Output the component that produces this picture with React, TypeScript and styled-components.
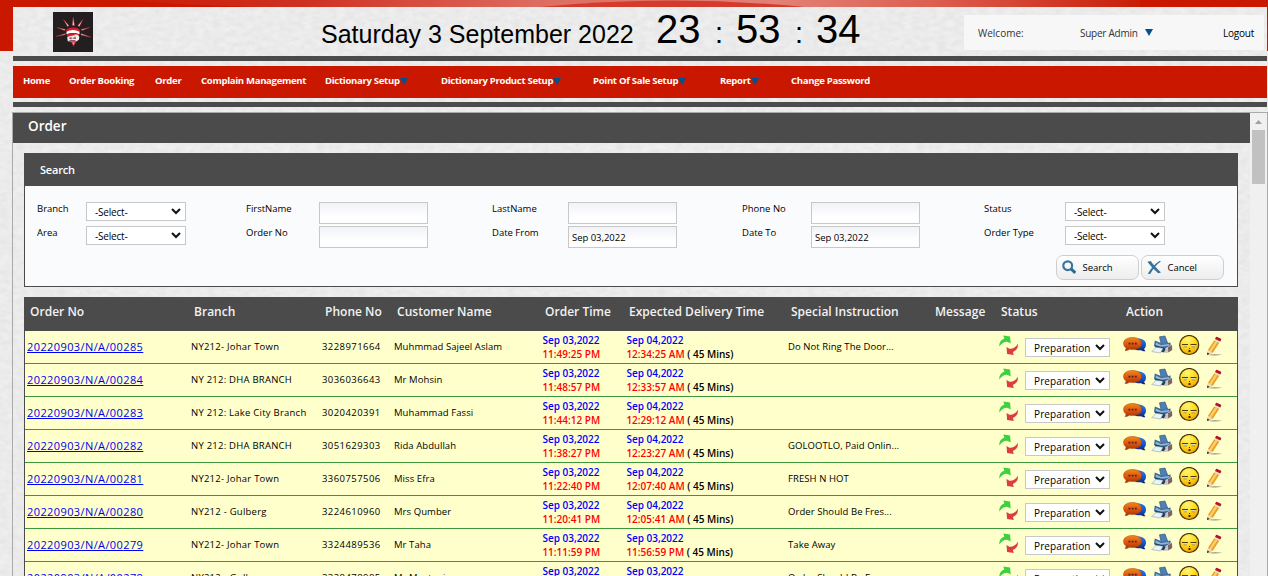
import React from "react";
import styled, { createGlobalStyle } from "styled-components";

const ui = `"Open Sans", "Noto Sans", sans-serif`;
const dark = "#4b4b4b";
const red = "#c91700";

// Faint paper grain for the page and the header strip.
const paper = `url("data:image/svg+xml,${encodeURIComponent(
  `<svg xmlns="http://www.w3.org/2000/svg" width="300" height="300"><filter id="n" x="0" y="0" width="100%" height="100%" color-interpolation-filters="sRGB"><feTurbulence type="fractalNoise" baseFrequency="0.12 0.2" numOctaves="3" seed="4" stitchTiles="stitch"/><feColorMatrix values="0.065 0 0 0 0.888  0.065 0 0 0 0.888  0.065 0 0 0 0.888  0 0 0 0 1"/></filter><rect width="300" height="300" filter="url(#n)"/></svg>`
)}")`;

const Global = createGlobalStyle`
  * { box-sizing: border-box; }
  html, body { margin: 0; padding: 0; }
  body { background: #ebebeb; font-family: ${ui}; font-size: 10px; color: #000; overflow: hidden; }
`;

const Page = styled.div`
  width: 1268px;
  height: 576px;
  overflow: hidden;
  display: flex;
  flex-direction: column;
  background: linear-gradient(${red}, ${red}) 0 0 / 100% 51px no-repeat, ${paper}, #ebebeb;
`;
const TopArt = styled.svg`
  display: block;
  flex: none;
`;
const Shell = styled.div`
  margin: 0 1px 0 13px;
  flex: none;
  background: ${paper}, #ececec;
`;
const Header = styled.header`
  height: 49px;
  display: flex;
  align-items: flex-start;
`;
const LogoBox = styled.div`
  margin: 5px 0 0 40px;
  width: 40px;
  height: 40px;
  flex: none;
`;
const Clock = styled.div`
  margin-left: 228px;
  width: 643px;
  flex: none;
  display: flex;
  align-items: baseline;
  font-family: "Liberation Sans", Arial, sans-serif;
  line-height: 44px;
  white-space: pre;
`;
const DateText = styled.span`
  font-size: 25px;
  width: 335px;
`;
const Digits = styled.span`
  font-size: 40px;
  width: 59px;
`;
const Colon = styled.span`
  font-size: 29px;
  width: 21px;
`;
const UserBar = styled.div`
  margin-top: 8px;
  width: 300px;
  height: 35px;
  background: #f7f7f7;
  display: flex;
  align-items: center;
  padding: 0 10px 0 14px;
  color: #333;
`;
const Welcome = styled.span`
  width: 102px;
`;
const UserName = styled.span`
  display: flex;
  align-items: center;
  gap: 7px;
  letter-spacing: -0.25px;
`;
const Logout = styled.span`
  margin-left: auto;
  color: #000;
  letter-spacing: -0.25px;
`;
const Rule = styled.div`
  height: 5px;
  background: ${dark};
`;
const Nav = styled.nav`
  height: 32px;
  margin: 5px 0 4px;
  background: ${red};
  display: flex;
  padding-left: 10px;
`;
const NavItem = styled.a<{ $w: number }>`
  width: ${(p) => p.$w}px;
  display: flex;
  align-items: center;
  height: 29px;
  color: #fff;
  font-size: 9.5px;
  font-weight: 700;
  letter-spacing: -0.28px;
  white-space: nowrap;
  & > svg { margin-top: 2px; }
`;
const Frame = styled.div`
  margin: 5px 0 0 12px;
  height: 464px;
  flex: none;
  border: 1px solid #a9a9a9;
  border-bottom: 0;
  display: flex;
`;
const Content = styled.main`
  width: 1237px;
  height: 463px;
  overflow: hidden;
`;
const PageTitle = styled.h1`
  margin: 0;
  height: 30px;
  background: ${dark};
  color: #fff;
  font-size: 13.5px;
  font-weight: 600;
  line-height: 26px;
  padding-left: 15px;
`;
const ScrollBar = styled.div`
  width: 17px;
  background: #f0f0f0;
  display: flex;
  flex-direction: column;
  align-items: center;
`;
const ScrollUp = styled.svg`
  display: block;
`;
const Thumb = styled.div`
  width: 13px;
  height: 54px;
  background: #c1c1c1;
`;
const SearchPanel = styled.section`
  margin: 10px 12px 0 11px;
  height: 134px;
  border: 1px solid ${dark};
  background: #fafbfd;
`;
const PanelTitle = styled.h2`
  margin: 0;
  height: 32px;
  background: ${dark};
  color: #fff;
  font-size: 11px;
  font-weight: 600;
  letter-spacing: -0.2px;
  line-height: 32px;
  padding-left: 15px;
`;
const Fields = styled.div`
  display: grid;
  grid-template-columns: 49px 160px 73px 173px 76px 174px 69px 173px 81px 100px;
  grid-auto-rows: 24px;
  padding: 16px 0 0 12px;
`;
const Label = styled.label`
  font-size: 9.5px;
  line-height: 14px;
  white-space: nowrap;
`;
const Input = styled.div`
  width: 109px;
  height: 22px;
  border: 1px solid #c8c8c8;
  background: linear-gradient(#f0f2f8, #fff 70%);
  padding-left: 3px;
  font-size: 9.5px;
  letter-spacing: -0.03px;
  line-height: 21px;
`;
const SelectBox = styled.div<{ $w: number; $ls: number }>`
  width: ${(p) => p.$w}px;
  height: 19px;
  border: 1px solid #c8c8c8;
  background: #fff;
  display: flex;
  align-items: center;
  justify-content: space-between;
  padding: 1px 4px 0 8px;
  letter-spacing: ${(p) => p.$ls}px;
  white-space: nowrap;
  & > svg { margin-top: -2px; }
`;
const Buttons = styled.div`
  display: flex;
  justify-content: flex-end;
  gap: 2px;
  margin: 5px 13px 0 0;
`;
const Button = styled.button`
  width: 83px;
  height: 25px;
  border: 1px solid #cfcfcf;
  border-radius: 7px;
  background: linear-gradient(#fff, #ededed);
  font: 9.5px ${ui};
  color: #000;
  padding: 0 0 0 5px;
  display: flex;
  align-items: center;
  gap: 5.5px;
`;
const Table = styled.section`
  margin: 10px 12px 0 11px;
  border: 1px solid ${dark};
  border-top: 0;
`;
const columns = "164px 131px 72px 148px 84px 162px 144px 66px 125px 1fr";
const HeadRow = styled.div`
  display: grid;
  grid-template-columns: ${columns};
  height: 34px;
  background: ${dark};
  color: #f2f2f2;
  font-size: 12px;
  font-weight: 600;
  letter-spacing: 0.02px;
  line-height: 30px;
`;
const HeadCell = styled.div`
  padding-left: 5px;
  white-space: nowrap;
`;
const Row = styled.div`
  display: grid;
  grid-template-columns: ${columns};
  height: 33px;
  background: #ffffcc;
  border-bottom: 1px solid #3c963c;
`;
const Cell = styled.div`
  padding-left: 2px;
  font-size: 9.5px;
  line-height: 32px;
  white-space: nowrap;
  letter-spacing: 0.07px;
`;
const BranchCell = styled(Cell)`
  letter-spacing: 0.24px;
`;
const PhoneCell = styled(Cell)`
  letter-spacing: 0.43px;
`;
const OrderLink = styled.a`
  color: #0000ee;
  font-size: 11px;
  letter-spacing: 0.4px;
  text-decoration: underline;
`;
const Stamp = styled.div`
  padding: 2px 0 0 2.4px;
  line-height: 14px;
  font-weight: 600;
  white-space: nowrap;
`;
const Day = styled.div`
  color: #0000ff;
`;
const Time = styled.span`
  color: #ff0000;
`;
const StatusCell = styled.div`
  display: flex;
  padding: 4px 0 0 3px;
  gap: 6px;
  & > div { margin-top: 3px; }
`;
const ActionCell = styled.div`
  display: flex;
  padding: 4px 0 0 2px;
  gap: 4px;
`;
const Icon = styled.svg`
  display: block;
  flex: none;
`;

const Down = () => (
  <Icon width="8" height="7" viewBox="0 0 8 7"><path d="M0 0h8L4 7z" fill="#00518f" /></Icon>
);
const Chevron = () => (
  <Icon width="10" height="7" viewBox="0 0 10 7"><path d="M1 1l4 4 4-4" fill="none" stroke="#111" strokeWidth="2" /></Icon>
);

const Logo = () => (
  <Icon width="40" height="40" viewBox="0 0 40 40">
    <rect width="40" height="40" fill="#231f20" />
    <g fill="#e9dcdc" stroke="#b5222d" strokeWidth=".5">
      <path d="M19.300 13.500l.9-8.500 1.300 8.500zM14.500 14.500L10.500 7.500 16 13.700zM24.800 13.700L29.800 7.500 26.500 14.500zM11.500 18.600L4 15.500 12.500 17.500zM28 17.500L36.500 15.500 29 18.600zM12 22.800L3 24.500 12.500 21.500zM28 21.500L38 25.200 28 23z" />
    </g>
    <path d="M13 19q.5-3.300 7-3.500 6.500.2 7 3.500l-1 1.500q-6-2.500-12 0z" fill="#d0202e" />
    <path d="M13.500 19.700q6.500-3.200 13 0v2.600q-6.500-2.600-13 0z" fill="#fff" />
    <path d="M14 22.300q6-2.300 12 0l-.5 6-3 2.500-2 4-2-4-4-2.500z" fill="#d0202e" />
    <path d="M14.300 25q3-1.600 7-1.500l.5-1 3 .3 1.500 2-.3 2.700-2.500 1.800h-8.700z" fill="#f4eeee" />
    <path d="M16 26.200h2.500m1 0h3.500M16.500 28.500h6M18 25v2.500m4-3v2.500" stroke="#77323a" strokeWidth=".8" />
    <path d="M19 30.500h3l-1.500 2.500z" fill="#e9a0a4" />
  </Icon>
);

const Swap = () => (
  <Icon width="20" height="21" viewBox="0 0 20 21">
    <path d="M.3 11.500Q-.2 5.500 5.300 3.400L4.300.4l6.800 1 .6 7-2.900-1.500Q4 6.200.3 11.500z" fill="#3fd03f" />
    <path d="M19 8.800Q19.300 15.200 13.900 17l.9 3-6.700-.9-.6-7 2.900 1.700Q15.500 14.200 19 8.800z" fill="#dc3f3b" />
  </Icon>
);

const Chat = () => (
  <Icon width="24" height="20" viewBox="0 0 24 20">
    <defs>
      <linearGradient id="chatOrange" x1="0" y1="0" x2="0" y2="1">
        <stop offset="0" stopColor="#ee8a18" /><stop offset=".55" stopColor="#dd520c" /><stop offset="1" stopColor="#9c3508" />
      </linearGradient>
      <linearGradient id="chatBlue" x1="0" y1="0" x2="0" y2="1">
        <stop offset="0" stopColor="#2d79e6" /><stop offset=".6" stopColor="#174fc4" /><stop offset="1" stopColor="#0a246e" />
      </linearGradient>
    </defs>
    <path d="M15 3.500c5 0 8 2.500 8 6 0 2-.8 3.500-2 4.500l1.500 2.200c-2.500 0-3.600-.6-4.500-1-5 .8-9-1.700-9-5.700s2-6 6-6z" fill="url(#chatBlue)" />
    <path d="M9.500 2.500c5.500 0 9 2.400 9 6s-3.500 6-9 6q-1.500 0-3-.3-1.500 1.300-4.500 1.500.9-1.200 1-2.600Q.5 11.500.5 8.500c0-3.600 3.500-6 9-6z" fill="url(#chatOrange)" stroke="#a84308" strokeWidth=".5" />
    <path d="M5.500 7.800h1.800v1.800H5.500zM8.700 7.800h1.800v1.800H8.700zM11.900 7.800h1.800v1.800h-1.800z" fill="#4c2030" />
  </Icon>
);

const Printer = () => (
  <Icon width="22" height="20" viewBox="0 0 22 20">
    <path d="M8.500 1.800l5.500-.8 2.600 7-6.600 1z" fill="#4e80b5" stroke="#284a78" strokeWidth=".6" />
    <path d="M3.800 5.500l5 2 1.500 1.500 6.500-1 2.700-.5.3 4.500L17 15H8L3 11z" fill="#3d6a9c" />
    <path d="M5 7.500l5 2.500 8-1 .5 1.500-9 1.500-5-2z" fill="#8db6d8" />
    <path d="M13 14l7.500-4.500.8 5L16 18l-4-.5z" fill="#cfc5c2" />
    <path d="M17 12.200l4-2.200.2 5-4 2.600z" fill="#7b6465" />
    <path d="M4 10.500l9 1.700 1.500 2-1.500 3-10.500-.7 2.500-3.500z" fill="#21425f" />
    <path d="M5 12.300l7 1-2.500 4.700L.8 16.600z" fill="#e9f4f9" stroke="#81909c" strokeWidth=".5" />
  </Icon>
);

const Face = () => (
  <Icon width="23" height="21" viewBox="0 0 23 21">
    <defs>
      <radialGradient id="faceFill" cx=".4" cy=".22" r=".85">
        <stop offset="0" stopColor="#fff57a" /><stop offset=".45" stopColor="#ffe01c" /><stop offset="1" stopColor="#f29a00" />
      </radialGradient>
    </defs>
    <circle cx="12.200" cy="10" r="9.500" fill="url(#faceFill)" stroke="#4a3205" strokeWidth="1.200" />
    <path d="M6 10h4.500v1.600H6.500zM14 10h4.500l-.5 1.600h-3.500z" fill="#d6dcc4" />
    <path d="M5 9.500h6M13.500 9.500h6" stroke="#4d3a08" strokeWidth="1" />
    <path d="M6.500 11.900h3.500M14.500 11.900H18" stroke="#8a7020" strokeWidth=".6" />
    <path d="M12 13h1v1h-1zM11.500 15h2v2h-2z" fill="#4a3000" />
  </Icon>
);

const Pencil = () => (
  <Icon width="20" height="21" viewBox="0 0 20 21">
    <path d="M3.500 20q6-1.400 15-.3-7 1.200-15 .3z" fill="#8f8f80" />
    <path d="M10.300 5.300l5 2.400L8.800 17.700 3 20l1.200-5.500z" fill="#e9a02b" />
    <path d="M11.500 5.900l2 1-6.700 10.300-1.700-1.200z" fill="#ffcf66" />
    <path d="M4.200 14.700l4.500 3L3 20z" fill="#f0d9b4" />
    <path d="M3.500 17.500l2 1.500L3 20z" fill="#1a1a1a" />
    <path d="M10.300 5.300l.8-1.400 5 2.300-.8 1.500z" fill="#e2e2e2" />
    <path d="M11 4l1-1.900q.5-.6 1.300-.2l3.300 1.500q.9.500.6 1.300l-.9 1.800z" fill="#b3161b" />
  </Icon>
);

const SearchIcon = () => (
  <Icon width="15" height="15" viewBox="0 0 15 15">
    <circle cx="5.700" cy="5.700" r="4.400" fill="none" stroke="#35779f" strokeWidth="2.200" />
    <path d="M9 8.800l4.300 4" stroke="#2e6b93" strokeWidth="3" />
  </Icon>
);
const CancelIcon = () => (
  <Icon width="15" height="15" viewBox="0 0 15 15">
    <path d="M.3 1.700l3.400-.7q3.300 4.800 10.300 11.500l-2.800.7Q5 8 .3 1.700z" fill="#36729c" />
    <path d="M14 1.200Q7.500 6 3.200 14l-2.400-.3Q5 6 12.300.9z" fill="#36729c" />
  </Icon>
);

const nav: [string, number, boolean][] = [
  ["Home", 46, false],
  ["Order Booking", 86, false],
  ["Order", 46, false],
  ["Complain Management", 124, false],
  ["Dictionary Setup", 116, true],
  ["Dictionary Product Setup", 152, true],
  ["Point Of Sale Setup", 127, true],
  ["Report", 71, true],
  ["Change Password", 100, false],
];

const heads = ["Order No", "Branch", "Phone No", "Customer Name", "Order Time", "Expected Delivery Time", "Special Instruction", "Message", "Status", "Action"];

interface Order {
  no: string; branch: string; phone: string; name: string;
  time: string; dueDay: string; due: string; note: string;
}
const orders: Order[] = [
  { no: "285", branch: "NY212- Johar Town", phone: "3228971664", name: "Muhmmad Sajeel Aslam", time: "11:49:25 PM", dueDay: "Sep 04,2022", due: "12:34:25 AM", note: "Do Not Ring The Door..." },
  { no: "284", branch: "NY 212: DHA BRANCH", phone: "3036036643", name: "Mr Mohsin", time: "11:48:57 PM", dueDay: "Sep 04,2022", due: "12:33:57 AM", note: "" },
  { no: "283", branch: "NY 212: Lake City Branch", phone: "3020420391", name: "Muhammad Fassi", time: "11:44:12 PM", dueDay: "Sep 04,2022", due: "12:29:12 AM", note: "" },
  { no: "282", branch: "NY 212: DHA BRANCH", phone: "3051629303", name: "Rida Abdullah", time: "11:38:27 PM", dueDay: "Sep 04,2022", due: "12:23:27 AM", note: "GOLOOTLO, Paid Onlin..." },
  { no: "281", branch: "NY212- Johar Town", phone: "3360757506", name: "Miss Efra", time: "11:22:40 PM", dueDay: "Sep 04,2022", due: "12:07:40 AM", note: "FRESH N HOT" },
  { no: "280", branch: "NY212 - Gulberg", phone: "3224610960", name: "Mrs Qumber", time: "11:20:41 PM", dueDay: "Sep 04,2022", due: "12:05:41 AM", note: "Order Should Be Fres..." },
  { no: "279", branch: "NY212- Johar Town", phone: "3324489536", name: "Mr Taha", time: "11:11:59 PM", dueDay: "Sep 03,2022", due: "11:56:59 PM", note: "Take Away" },
  { no: "278", branch: "NY212 - Gulberg", phone: "3328478985", name: "Mr Mustaqim", time: "11:08:16 PM", dueDay: "Sep 03,2022", due: "11:53:16 PM", note: "Order Should Be Fres..." },
];

const Select = ({ text, w, ls = -0.2 }: { text: string; w: number; ls?: number }) => (
  <SelectBox $w={w} $ls={ls}><span>{text}</span><Chevron /></SelectBox>
);

const OrderRow = ({ o }: { o: Order }) => (
  <Row>
    <Cell><OrderLink>20220903/N/A/00{o.no}</OrderLink></Cell>
    <BranchCell>{o.branch}</BranchCell>
    <PhoneCell>{o.phone}</PhoneCell>
    <Cell>{o.name}</Cell>
    <Stamp><Day>Sep 03,2022</Day><Time>{o.time}</Time></Stamp>
    <Stamp><Day>{o.dueDay}</Day><Time>{o.due}</Time> ( 45 Mins)</Stamp>
    <Cell>{o.note}</Cell>
    <Cell />
    <StatusCell><Swap /><Select text="Preparation" w={85} ls={0.12} /></StatusCell>
    <ActionCell><Chat /><Printer /><Face /><Pencil /></ActionCell>
  </Row>
);

export default function App() {
  return (
    <>
      <Global />
      <Page>
        <TopArt width="1268" height="7" viewBox="0 0 1268 7">
          <defs>
            <linearGradient id="sheen" x1="100" x2="1140" y1="0" y2="0" gradientUnits="userSpaceOnUse">
              <stop offset="0" stopColor="#c91700" />
              <stop offset=".2" stopColor="#cf3222" />
              <stop offset=".43" stopColor="#de6e62" />
              <stop offset=".65" stopColor="#e28176" />
              <stop offset=".8" stopColor="#dc5f50" />
              <stop offset="1" stopColor="#c91d07" />
            </linearGradient>
          </defs>
          <path d="M120 0Q180 5 260 7H1140V0z" fill="url(#sheen)" />
          <path d="M540 7Q670-6 805 7z" fill="#d43b2c" />
        </TopArt>
        <Shell>
          <Header>
            <LogoBox><Logo /></LogoBox>
            <Clock>
              <DateText>Saturday 3 September 2022</DateText>
              <Digits>23</Digits><Colon>:</Colon>
              <Digits>53</Digits><Colon>:</Colon>
              <Digits>34</Digits>
            </Clock>
            <UserBar>
              <Welcome>Welcome:</Welcome>
              <UserName>Super Admin <Down /></UserName>
              <Logout>Logout</Logout>
            </UserBar>
          </Header>
          <Rule />
          <Nav>
            {nav.map(([t, w, d]) => (
              <NavItem key={t} $w={w}>{t}{d && <Down />}</NavItem>
            ))}
          </Nav>
          <Rule />
        </Shell>
        <Frame>
          <Content>
            <PageTitle>Order</PageTitle>
            <SearchPanel>
              <PanelTitle>Search</PanelTitle>
              <Fields>
                <Label>Branch</Label><Select text="-Select-" w={100} />
                <Label>FirstName</Label><Input />
                <Label>LastName</Label><Input />
                <Label>Phone No</Label><Input />
                <Label>Status</Label><Select text="-Select-" w={100} />
                <Label>Area</Label><Select text="-Select-" w={100} />
                <Label>Order No</Label><Input />
                <Label>Date From</Label><Input>Sep 03,2022</Input>
                <Label>Date To</Label><Input>Sep 03,2022</Input>
                <Label>Order Type</Label><Select text="-Select-" w={100} />
              </Fields>
              <Buttons>
                <Button><SearchIcon />Search</Button>
                <Button><CancelIcon />Cancel</Button>
              </Buttons>
            </SearchPanel>
            <Table>
              <HeadRow>
                {heads.map((h) => <HeadCell key={h}>{h}</HeadCell>)}
              </HeadRow>
              {orders.map((o) => <OrderRow key={o.no} o={o} />)}
            </Table>
          </Content>
          <ScrollBar>
            <ScrollUp width="17" height="17" viewBox="0 0 17 17"><path d="M5 11l3.500-4 3.500 4z" fill="#a0a0a0" /></ScrollUp>
            <Thumb />
          </ScrollBar>
        </Frame>
      </Page>
    </>
  );
}
